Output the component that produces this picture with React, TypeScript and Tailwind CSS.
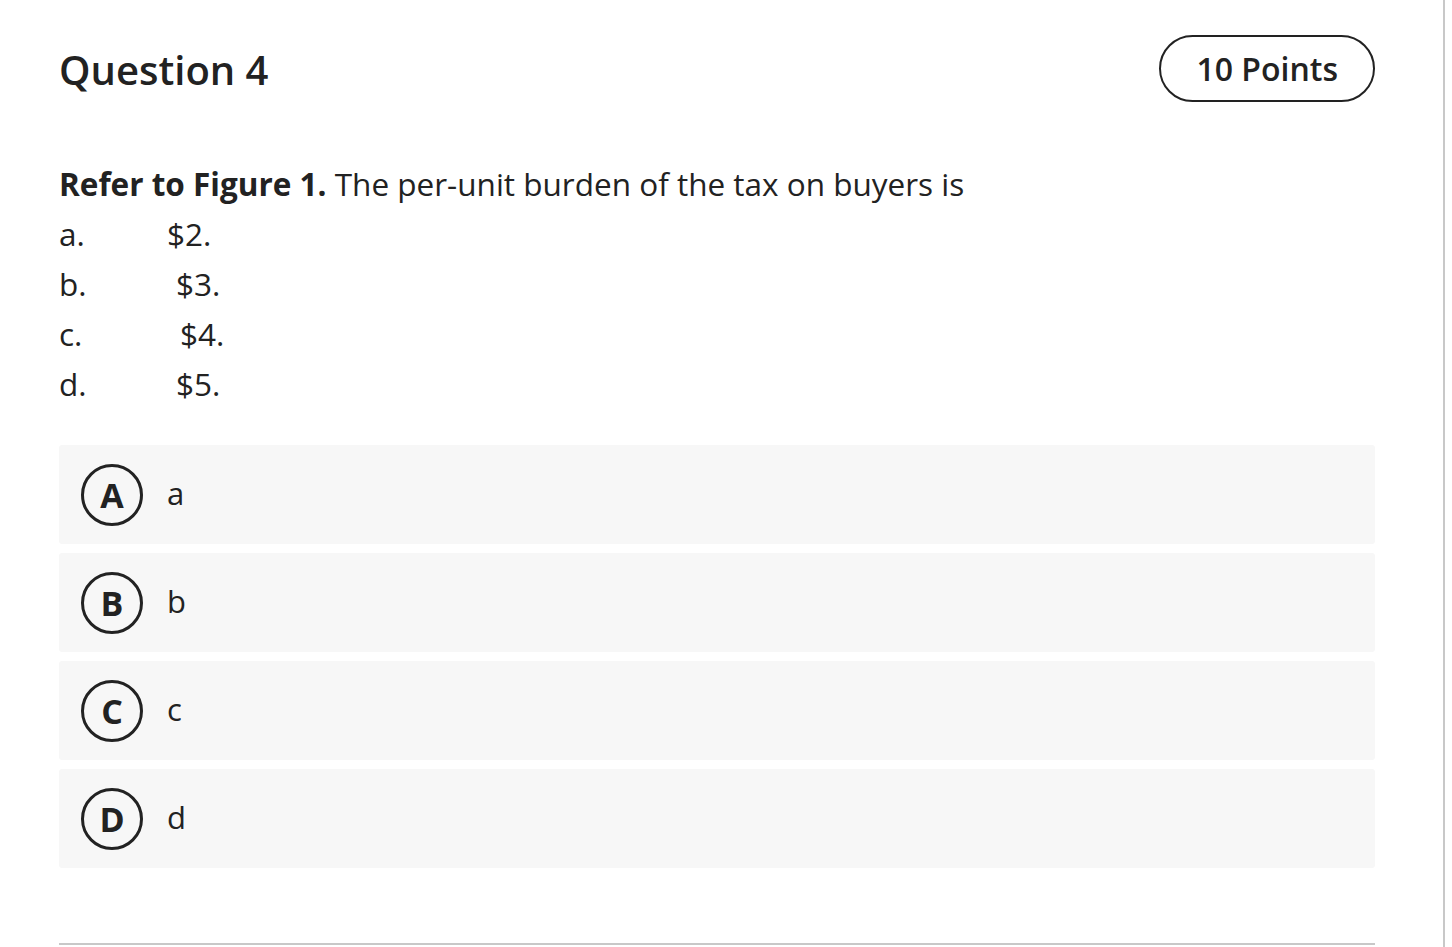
const options = [
  { key: 'a.', value: '$2.', indent: 'pl-0' },
  { key: 'b.', value: '$3.', indent: 'pl-[9px]' },
  { key: 'c.', value: '$4.', indent: 'pl-[13px]' },
  { key: 'd.', value: '$5.', indent: 'pl-[9px]' },
];

const answers = [
  { letter: 'A', label: 'a' },
  { letter: 'B', label: 'b' },
  { letter: 'C', label: 'c' },
  { letter: 'D', label: 'd' },
];

const AnswerCard = ({ letter, label }: { letter: string; label: string }) => (
  <div className="flex items-center h-[99px] bg-[#f7f7f7] rounded-[3px] pl-[22px] gap-6">
    <span className="flex items-center justify-center w-[62px] h-[62px] rounded-full border-[3px] border-[#222] font-bold text-[34px] leading-none text-[#222]">
      {letter}
    </span>
    <span className="text-[31px] text-[#222] leading-none -mt-[2px]">{label}</span>
  </div>
);

export default function App() {
  return (
    <div className="flex min-h-[947px] bg-white font-['Open_Sans',sans-serif] text-[#222]">
      <div className="w-[1445px] border-r-2 border-[#c8c8c8] pl-[59px] pr-[68px] pt-[35px]">
        <div className="flex items-center justify-between">
          <h1 className="text-[40px] font-semibold leading-none pt-[2px]">Question 4</h1>
          <div className="h-[67px] px-[35px] flex items-center rounded-full border-2 border-[#222] text-[32px] font-semibold">
            10 Points
          </div>
        </div>

        <div className="mt-[57px] text-[31.5px] leading-[50px]">
          <p>
            <span className="font-bold">Refer to Figure 1.</span> The per-unit burden of the tax on buyers is
          </p>
          {options.map(o => (
            <div key={o.key} className="flex">
              <span className="w-[108px]">{o.key}</span>
              <span className={o.indent}>{o.value}</span>
            </div>
          ))}
        </div>

        <div className="mt-[36px] flex flex-col gap-[9px]">
          {answers.map(a => (
            <AnswerCard key={a.letter} letter={a.letter} label={a.label} />
          ))}
        </div>

        <div className="mt-[75px] h-[2px] bg-[#c8c8c8]" />
      </div>
    </div>
  );
}
